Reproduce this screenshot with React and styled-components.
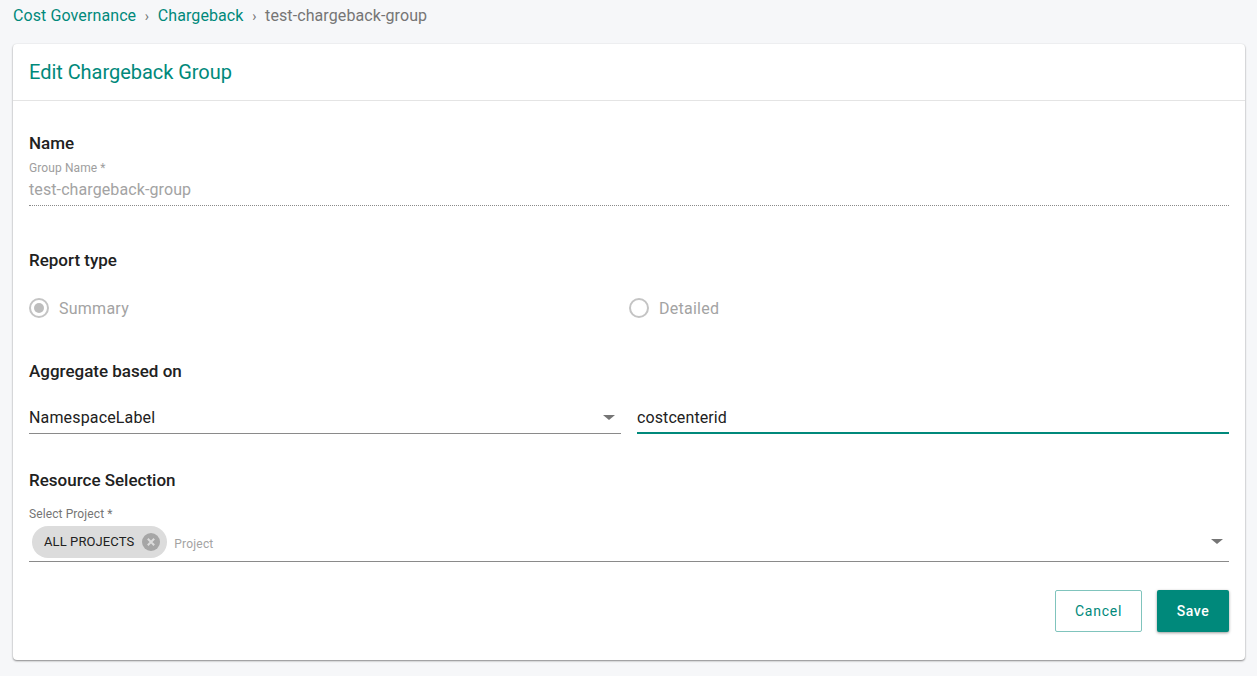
import React from "react";
import styled, { createGlobalStyle } from "styled-components";

const GlobalStyle = createGlobalStyle`
  html, body {
    margin: 0;
    padding: 0;
    background: #f6f7f9;
    font-family: Roboto, "Liberation Sans", sans-serif;
    overflow: hidden;
  }
`;

const Page = styled.div`
  width: 1257px;
  height: 676px;
  padding: 0 12px 0 13px;
  box-sizing: border-box;
`;

const Crumbs = styled.nav`
  height: 44px;
  padding-top: 6px;
  box-sizing: border-box;
  display: flex;
  align-items: flex-start;
  font-size: 16px;
  line-height: 20px;
  letter-spacing: 0.1px;
`;

const CrumbLink = styled.a`
  color: #00897b;
`;

const CrumbSep = styled.span`
  color: #757575;
  width: 21.5px;
  text-align: center;
  font-size: 14px;
`;

const CrumbCurrent = styled.span`
  color: #757575;
`;

const Card = styled.section`
  height: 616px;
  background: #fff;
  border-radius: 4px;
  box-shadow: 0 1px 2px rgba(0, 0, 0, 0.45), 0 0 2px rgba(0, 0, 0, 0.06);
`;

const CardHeader = styled.header`
  height: 57px;
  box-sizing: border-box;
  padding: 16px 16px 0;
  border-bottom: 1px solid #e4e4e4;
  color: #00897b;
  font-size: 20px;
  line-height: 24px;
  letter-spacing: -0.04px;
`;

const CardBody = styled.div`
  padding: 0 16px;
  display: flex;
  flex-direction: column;
`;

const SectionTitle = styled.h2`
  margin: ${(p) => p.$top}px 0 0;
  font-size: 17px;
  line-height: 20px;
  font-weight: 500;
  color: #212121;
`;

const FieldLabel = styled.label`
  display: block;
  margin-top: ${(p) => p.$top}px;
  font-size: 12px;
  line-height: 14px;
  letter-spacing: 0.1px;
  color: ${(p) => (p.$disabled ? "#9e9e9e" : "#757575")};
`;

const DisabledValue = styled.div`
  height: 31px;
  box-sizing: border-box;
  padding-top: 5px;
  font-size: 16px;
  line-height: 20px;
  letter-spacing: 0.1px;
  color: #a3a3a3;
  border-bottom: 1px dotted #8a8a8a;
`;

const RadioRow = styled.div`
  margin-top: 28px;
  display: grid;
  grid-template-columns: 600px 1fr;
  height: 20px;
`;

const RadioOption = styled.label`
  display: flex;
  align-items: center;
  gap: 10px;
  font-size: 16px;
  letter-spacing: 0.25px;
  color: #a3a3a3;
`;

const RadioCircle = styled.span`
  width: 20px;
  height: 20px;
  box-sizing: border-box;
  border: 2px solid #c4c4c4;
  border-radius: 50%;
  display: flex;
  align-items: center;
  justify-content: center;
  &::after {
    content: "";
    display: ${(p) => (p.$checked ? "block" : "none")};
    width: 10px;
    height: 10px;
    border-radius: 50%;
    background: #bdbdbd;
  }
`;

const AggregateRow = styled.div`
  margin-top: 21px;
  display: grid;
  grid-template-columns: 592px 592px;
  gap: 16px;
`;

const SelectBox = styled.div`
  height: 32px;
  box-sizing: border-box;
  display: flex;
  align-items: center;
  justify-content: space-between;
  padding: 0 6px 1px 0;
  font-size: 16px;
  letter-spacing: 0.15px;
  color: #212121;
  border-bottom: 1px solid #8a8a8a;
`;

const Caret = styled.span`
  width: 0;
  height: 0;
  border-left: 6px solid transparent;
  border-right: 6px solid transparent;
  border-top: 5px solid #757575;
  margin-top: 1px;
`;

const TextBox = styled.div`
  height: 32px;
  box-sizing: border-box;
  display: flex;
  align-items: center;
  font-size: 16px;
  letter-spacing: 0.1px;
  color: #212121;
  border-bottom: 2px solid #00897b;
`;

const ChipField = styled.div`
  height: 41px;
  box-sizing: border-box;
  padding: 5px 6px 0 3px;
  display: flex;
  align-items: flex-start;
  border-bottom: 1px solid #8a8a8a;
`;

const Chip = styled.div`
  height: 32px;
  box-sizing: border-box;
  padding: 0 7px 1px 12px;
  display: flex;
  align-items: center;
  gap: 8px;
  background: #dcdcdc;
  border-radius: 16px;
  font-size: 13px;
  letter-spacing: 0.1px;
  color: #212121;
`;

const ChipClose = styled.svg`
  width: 18px;
  height: 18px;
  display: block;
  margin-top: 1px;
`;

const Placeholder = styled.span`
  margin-left: 7px;
  margin-top: 11px;
  font-size: 12px;
  line-height: 14px;
  letter-spacing: 0.2px;
  color: #a3a3a3;
`;

const ChipCaret = styled(Caret)`
  margin: 13px 0 0 auto;
`;

const Actions = styled.div`
  margin-top: 28px;
  display: flex;
  justify-content: flex-end;
  gap: 15px;
`;

const Button = styled.button`
  height: 42px;
  width: ${(p) => p.$width}px;
  border-radius: 2px;
  font-family: inherit;
  font-size: 14px;
  font-weight: ${(p) => (p.$primary ? 500 : 400)};
  letter-spacing: ${(p) => (p.$primary ? 0.5 : 0.75)}px;
  ${(p) =>
    p.$primary
      ? "background: #00897b; color: #fff; border: none; box-shadow: 0 1px 3px rgba(0,0,0,0.4);"
      : "background: #fff; color: #00897b; border: 1px solid #80c4bd;"}
`;

export default function App() {
  return (
    <Page>
      <GlobalStyle />
      <Crumbs>
        <CrumbLink>Cost Governance</CrumbLink>
        <CrumbSep>›</CrumbSep>
        <CrumbLink>Chargeback</CrumbLink>
        <CrumbSep>›</CrumbSep>
        <CrumbCurrent>test-chargeback-group</CrumbCurrent>
      </Crumbs>
      <Card>
        <CardHeader>Edit Chargeback Group</CardHeader>
        <CardBody>
          <SectionTitle $top={32}>Name</SectionTitle>
          <FieldLabel $top={8} $disabled>Group Name *</FieldLabel>
          <DisabledValue>test-chargeback-group</DisabledValue>

          <SectionTitle $top={44}>Report type</SectionTitle>
          <RadioRow>
            <RadioOption>
              <RadioCircle $checked />
              Summary
            </RadioOption>
            <RadioOption>
              <RadioCircle />
              Detailed
            </RadioOption>
          </RadioRow>

          <SectionTitle $top={43}>Aggregate based on</SectionTitle>
          <AggregateRow>
            <SelectBox>
              NamespaceLabel
              <Caret />
            </SelectBox>
            <TextBox>costcenterid</TextBox>
          </AggregateRow>

          <SectionTitle $top={36}>Resource Selection</SectionTitle>
          <FieldLabel $top={17}>Select Project *</FieldLabel>
          <ChipField>
            <Chip>
              ALL PROJECTS
              <ChipClose viewBox="0 0 18 18">
                <circle cx="9" cy="9" r="9" fill="#a6a6a6" />
                <path d="M5.8 5.8l6.4 6.4M12.2 5.8l-6.4 6.4" stroke="#dcdcdc" strokeWidth="2" />
              </ChipClose>
            </Chip>
            <Placeholder>Project</Placeholder>
            <ChipCaret />
          </ChipField>

          <Actions>
            <Button $width={87}>Cancel</Button>
            <Button $width={72} $primary>Save</Button>
          </Actions>
        </CardBody>
      </Card>
    </Page>
  );
}
